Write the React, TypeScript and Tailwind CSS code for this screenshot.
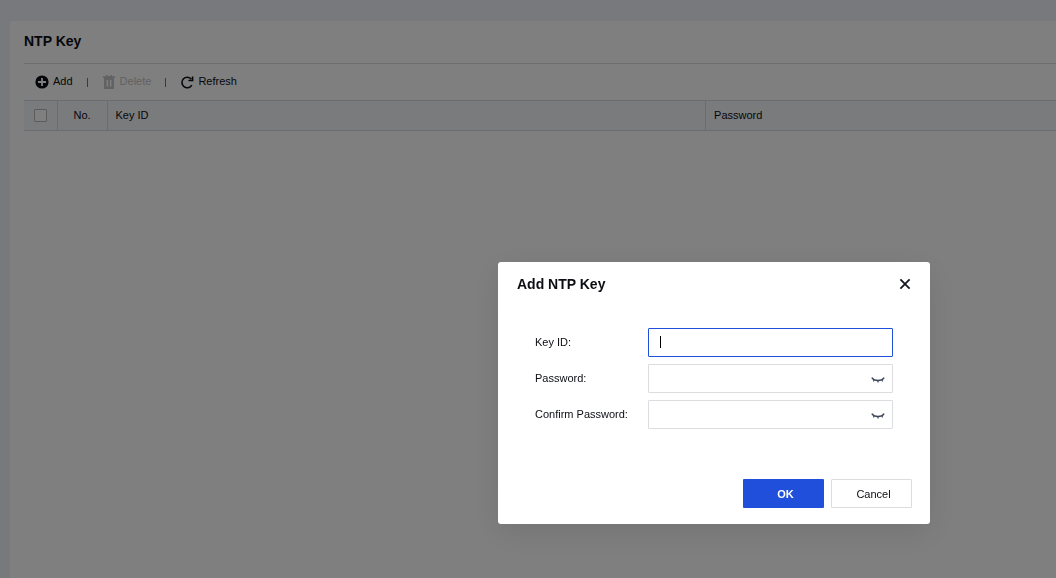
import { useState, type ReactNode } from "react";

function AddIcon() {
  return (
    <svg width="14" height="14" viewBox="0 0 14 14" aria-hidden="true">
      <circle cx="7" cy="7" r="6.6" fill="#0c0e14" />
      <path d="M7 3v8M3 7h8" stroke="#fff" strokeWidth="1.8" />
    </svg>
  );
}

function DeleteIcon() {
  return (
    <svg width="14" height="14" viewBox="0 0 14 14" aria-hidden="true">
      <path
        fill="#c4c4c4"
        fillRule="evenodd"
        d="M4 0h1.4v1h3.2V0H10v1.2h3v1.8H1V1.2h3zM2 3h10v11H2zM4.6 5v6.6h1.5V5zM7.9 5v6.6h1.5V5z"
      />
    </svg>
  );
}

function RefreshIcon() {
  return (
    <svg width="14" height="14" viewBox="0 0 14 14" aria-hidden="true">
      <path d="M11.8 10.2A5.3 5.3 0 1 1 11.4 4.2" fill="none" stroke="#0c0e14" strokeWidth="1.6" />
      <path d="M13.4 1.4v4.8H8.4V4.8h3.4V1.4z" fill="#0c0e14" />
    </svg>
  );
}

function ClosedEyeIcon() {
  return (
    <svg width="14" height="8" viewBox="0 0 14 8" fill="none" stroke="#3c4458" aria-hidden="true">
      <path d="M.8 1.6C3.4 5.4 10.6 5.4 13.2 1.6" strokeWidth="1.4" />
      <path d="M3.4 3.6L2.4 5.4M7 4.6v2M10.6 3.6l1 1.8" strokeWidth="1.2" />
    </svg>
  );
}

function CloseIcon() {
  return (
    <svg width="12" height="12" viewBox="0 0 12 12" aria-hidden="true">
      <path d="M1.4 1.4l9.2 9.2M10.6 1.4l-9.2 9.2" stroke="#14161f" strokeWidth="1.8" />
    </svg>
  );
}

function ToolButton({ icon, label, disabled }: { icon: ReactNode; label: string; disabled?: boolean }) {
  return (
    <button
      type="button"
      disabled={disabled}
      className="flex items-center gap-1 text-[#0c0e14] disabled:text-[#c4c4c4]"
    >
      {icon}
      <span className="pb-0.5">{label}</span>
    </button>
  );
}

function Divider() {
  return <span className="h-[9px] w-px bg-[#777]" />;
}

function PasswordField({ id, label }: { id: string; label: string }) {
  const [visible, setVisible] = useState(false);
  return (
    <div className="flex items-center">
      <label htmlFor={id} className="w-[113px] shrink-0 pb-0.5">
        {label}
      </label>
      <div className="flex h-[29px] flex-1 items-center rounded-[1px] border border-[#dcdde0] pr-[7px] focus-within:border-[#1f4fdb]">
        <input
          id={id}
          type={visible ? "text" : "password"}
          className="h-full min-w-0 flex-1 px-[11px] outline-none"
        />
        <button type="button" aria-label="Show password" className="pt-0.5" onClick={() => setVisible(!visible)}>
          <ClosedEyeIcon />
        </button>
      </div>
    </div>
  );
}

function AddKeyDialog() {
  return (
    <div
      role="dialog"
      aria-modal="true"
      aria-labelledby="dialog-title"
      className="w-[432px] rounded-[3px] bg-white pb-4 shadow-[0_8px_32px_rgba(0,0,0,0.1)]"
    >
      <header className="flex h-11 items-center justify-between px-[19px]">
        <h2 id="dialog-title" className="text-[14px] font-bold">
          Add NTP Key
        </h2>
        <button type="button" aria-label="Close">
          <CloseIcon />
        </button>
      </header>
      <form onSubmit={(event) => event.preventDefault()}>
        <div className="flex flex-col gap-[7px] px-[37px] pt-[22px]">
          <div className="flex items-center">
            <label htmlFor="key-id" className="w-[113px] shrink-0 pb-0.5">
              Key ID:
            </label>
            <div className="relative h-[29px] flex-1">
              <input
                id="key-id"
                className="peer h-full w-full rounded-[1px] border border-[#1f4fdb] px-[11px] caret-transparent outline-none"
                placeholder=" "
              />
              <span
                aria-hidden="true"
                className="pointer-events-none absolute top-2 left-3 hidden h-3 w-px bg-black peer-placeholder-shown:block"
              />
            </div>
          </div>
          <PasswordField id="password" label="Password:" />
          <PasswordField id="confirm-password" label="Confirm Password:" />
        </div>
        <div className="mt-[50px] flex justify-end gap-[7px] pr-[18px]">
          <button type="submit" className="h-[29px] w-[81px] rounded-[1px] bg-[#1f4fdb] pl-1 font-bold text-white">
            OK
          </button>
          <button type="button" className="h-[29px] w-[81px] rounded-[1px] border border-[#dcdde0] pl-1">
            Cancel
          </button>
        </div>
      </form>
    </div>
  );
}

export default function App() {
  return (
    <div className="flex min-h-screen flex-col bg-[#f0f3fa] pt-[21px] pl-2.5 font-['Liberation_Sans',Arial,sans-serif] text-[11px] leading-4 text-[#0c0e14]">
      <main className="flex-1 rounded-tl-[3px] bg-white pl-3.5">
        <h1 className="flex h-[43px] items-center border-b border-[#dcdde0] pb-0.5 text-[14px] font-bold">NTP Key</h1>
        <div className="flex h-9 items-center gap-3.5 pl-[11px]">
          <ToolButton icon={<AddIcon />} label="Add" />
          <Divider />
          <ToolButton icon={<DeleteIcon />} label="Delete" disabled />
          <Divider />
          <ToolButton icon={<RefreshIcon />} label="Refresh" />
        </div>
        <table className="w-full table-fixed border-y border-[#d4d9e6] bg-[#f5f7fa] text-left">
          <thead>
            <tr className="h-[30px]">
              <th className="w-[33px] border-r border-[#d4d9e6] p-0">
                <input
                  type="checkbox"
                  aria-label="Select all"
                  className="mx-auto block size-[13px] appearance-none rounded-[1px] border border-[#b8b8b8] bg-white"
                />
              </th>
              <th className="w-[50px] border-r border-[#d4d9e6] px-0 pt-0 pb-0.5 text-center font-normal">No.</th>
              <th className="w-[58%] border-r border-[#d4d9e6] px-2 pt-0 pb-0.5 font-normal">Key ID</th>
              <th className="px-2 pt-0 pb-0.5 font-normal">Password</th>
            </tr>
          </thead>
        </table>
      </main>
      <div className="fixed inset-0 flex items-end justify-end bg-black/50 pr-[126px] pb-[54px]">
        <AddKeyDialog />
      </div>
    </div>
  );
}
